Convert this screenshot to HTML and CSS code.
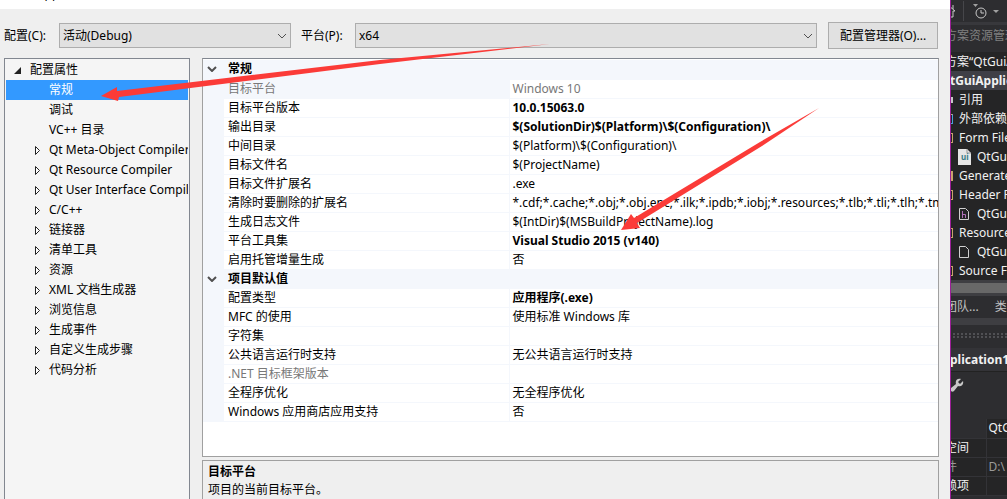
FILE: index.html
```html
<!DOCTYPE html>
<html lang="zh-CN">
<head>
<meta charset="utf-8">
<title>属性页</title>
<link rel="stylesheet" href="styles.css">
</head>
<body>
<main class="dialog">
  <header class="titlebar"><span class="title">QtGuiApp</span></header>
  <form class="config">
    <label for="cfg">配置(C):</label>
    <span class="combo combo-config">
      <select id="cfg"><option>活动(Debug)</option></select>
      <svg class="chevron" viewBox="0 0 10 6"><path d="M1 1l4 4 4-4"/></svg>
    </span>
    <label for="plat" class="label-platform">平台(P):</label>
    <span class="combo combo-platform">
      <select id="plat"><option>x64</option></select>
      <svg class="chevron" viewBox="0 0 10 6"><path d="M1 1l4 4 4-4"/></svg>
    </span>
    <button type="button" class="manager">配置管理器(O)...</button>
  </form>
  <div class="panes">
    <nav class="tree">
      <ul>
        <li class="root"><svg class="open" viewBox="0 0 7 7"><path d="M7 0v7H0z"/></svg>配置属性</li>
        <li class="selected"><i class="twist"></i>常规</li>
        <li><i class="twist"></i>调试</li>
        <li><i class="twist"></i>VC++ 目录</li>
        <li><svg class="twist" viewBox="0 0 6 9"><path d="M.5.5v8l4-4z"/></svg>Qt Meta-Object Compiler</li>
        <li><svg class="twist" viewBox="0 0 6 9"><path d="M.5.5v8l4-4z"/></svg>Qt Resource Compiler</li>
        <li><svg class="twist" viewBox="0 0 6 9"><path d="M.5.5v8l4-4z"/></svg>Qt User Interface Compiler</li>
        <li><svg class="twist" viewBox="0 0 6 9"><path d="M.5.5v8l4-4z"/></svg>C/C++</li>
        <li><svg class="twist" viewBox="0 0 6 9"><path d="M.5.5v8l4-4z"/></svg>链接器</li>
        <li><svg class="twist" viewBox="0 0 6 9"><path d="M.5.5v8l4-4z"/></svg>清单工具</li>
        <li><svg class="twist" viewBox="0 0 6 9"><path d="M.5.5v8l4-4z"/></svg>资源</li>
        <li><svg class="twist" viewBox="0 0 6 9"><path d="M.5.5v8l4-4z"/></svg>XML 文档生成器</li>
        <li><svg class="twist" viewBox="0 0 6 9"><path d="M.5.5v8l4-4z"/></svg>浏览信息</li>
        <li><svg class="twist" viewBox="0 0 6 9"><path d="M.5.5v8l4-4z"/></svg>生成事件</li>
        <li><svg class="twist" viewBox="0 0 6 9"><path d="M.5.5v8l4-4z"/></svg>自定义生成步骤</li>
        <li><svg class="twist" viewBox="0 0 6 9"><path d="M.5.5v8l4-4z"/></svg>代码分析</li>
      </ul>
    </nav>
    <section class="detail">
      <div class="sheet">
        <table class="props">
          <colgroup><col class="col-gutter"><col class="col-name"><col></colgroup>
          <tbody>
            <tr class="group"><td><svg class="fold" viewBox="0 0 10 6"><path d="M1 1l4 4 4-4"/></svg></td><th colspan="2">常规</th></tr>
            <tr class="current"><td></td><td>目标平台</td><td>Windows 10</td></tr>
            <tr><td></td><td>目标平台版本</td><td class="set">10.0.15063.0</td></tr>
            <tr><td></td><td>输出目录</td><td class="set">$(SolutionDir)$(Platform)\$(Configuration)\</td></tr>
            <tr><td></td><td>中间目录</td><td>$(Platform)\$(Configuration)\</td></tr>
            <tr><td></td><td>目标文件名</td><td>$(ProjectName)</td></tr>
            <tr><td></td><td>目标文件扩展名</td><td>.exe</td></tr>
            <tr><td></td><td>清除时要删除的扩展名</td><td>*.cdf;*.cache;*.obj;*.obj.enc;*.ilk;*.ipdb;*.iobj;*.resources;*.tlb;*.tli;*.tlh;*.tmp;</td></tr>
            <tr><td></td><td>生成日志文件</td><td>$(IntDir)$(MSBuildProjectName).log</td></tr>
            <tr><td></td><td>平台工具集</td><td class="set">Visual Studio 2015 (v140)</td></tr>
            <tr><td></td><td>启用托管增量生成</td><td>否</td></tr>
            <tr class="group"><td><svg class="fold" viewBox="0 0 10 6"><path d="M1 1l4 4 4-4"/></svg></td><th colspan="2">项目默认值</th></tr>
            <tr><td></td><td>配置类型</td><td class="set">应用程序(.exe)</td></tr>
            <tr><td></td><td>MFC 的使用</td><td>使用标准 Windows 库</td></tr>
            <tr><td></td><td>字符集</td><td></td></tr>
            <tr><td></td><td>公共语言运行时支持</td><td>无公共语言运行时支持</td></tr>
            <tr class="disabled"><td></td><td>.NET 目标框架版本</td><td></td></tr>
            <tr><td></td><td>全程序优化</td><td>无全程序优化</td></tr>
            <tr><td></td><td>Windows 应用商店应用支持</td><td>否</td></tr>
          </tbody>
        </table>
      </div>
      <div class="help">
        <strong>目标平台</strong>
        <p>项目的当前目标平台。</p>
      </div>
    </section>
  </div>
</main>
<aside class="ide">
  <div class="ide-body">
    <div class="ide-tools">
      <svg class="ico-home" viewBox="0 0 10 14"><path d="M1 1l7 6H6v6H1M6 5V1"/></svg>
      <span class="sep"></span>
      <svg class="ico-clock" viewBox="0 0 14 16"><circle cx="8" cy="10" r="5"/><path d="M8 7v3h3"/><path class="fill" d="M0 1h5L2.500 4z"/></svg>
      <svg class="ico-drop" viewBox="0 0 6 3"><path d="M0 0h6L3 3z"/></svg>
    </div>
    <div class="ide-title">方案资源管理器</div>
    <ul class="files">
      <li>方案“QtGuiApplication1”</li>
      <li class="project">tGuiApplication1</li>
      <li class="folder"><i class="mark ref"></i>引用</li>
      <li class="folder"><i class="mark dep"></i>外部依赖项</li>
      <li class="folder"><i class="mark"></i>Form Files</li>
      <li class="file"><svg class="page" viewBox="0 0 14 16"><path class="paper" d="M1 0h9l4 4v12H1z"/><path class="crease" d="M10 0v4h4"/></svg><span>QtGuiApplication1.ui</span><b class="ui">ui</b></li>
      <li class="folder"><i class="mark full"></i>Generated Files</li>
      <li class="folder"><i class="mark"></i>Header Files</li>
      <li class="file"><svg class="page" viewBox="0 0 14 16"><path class="outline" d="M2.500 2.500h6l3 3v8h-9z"/><path class="header" d="M5.500 5v7M5.500 8.500h3V12"/></svg><span>QtGuiApplication1.h</span></li>
      <li class="folder"><i class="mark"></i>Resource Files</li>
      <li class="file"><svg class="page" viewBox="0 0 14 16"><path class="outline" d="M2.500 2.500h6l3 3v8h-9z"/></svg><span>QtGuiApplication1.qrc</span></li>
      <li class="folder"><i class="mark"></i>Source Files</li>
    </ul>
    <div class="hscroll"></div>
    <div class="tabs"><span>团队...</span><span>类视图</span></div>
    <div class="grip"><div class="dots"></div></div>
    <div class="object">plication1</div>
    <div class="wrench"><svg viewBox="0 0 14 14"><path d="M1 13a2 2 0 0 1 0-3l5-4C5 3 7 0 11 1L8 4l2 2 3-3c1 4-2 6-5 5l-4 5c-1 1-2 1-3 0z"/></svg></div>
    <table class="ide-props">
      <tr><td class="blank"></td><td>QtGui</td></tr>
      <tr><td>空间</td><td></td></tr>
      <tr class="dim"><td>件</td><td>D:\</td></tr>
      <tr><td>赖项</td><td></td></tr>
    </table>
  </div>
</aside>
<svg class="arrows" viewBox="0 0 1007 499">
  <path d="M101 96L117 87L117 91L380 60L550 44L380 64L119 97L118 101z"/>
  <path d="M621 230L631 214L634 218L760 142L819 108L762 146L637 223L640 228z"/>
</svg>
</body>
</html>
```
FILE: styles.css
```css
* { box-sizing: border-box; }
body {
  margin: 0;
  height: 100vh;
  display: flex;
  overflow: hidden;
  font: 12px/18px "Noto Sans", "Noto Sans CJK SC", sans-serif;
  color: #000;
  background: #efefef;
}
ul { list-style: none; margin: 0; padding: 0; }
p { margin: 0; }
table { border-collapse: collapse; border-spacing: 0; }
select, button { font: inherit; color: inherit; }

.dialog { flex: 1; min-width: 0; display: flex; flex-direction: column; }
.titlebar {
  height: 9px;
  flex: none;
  background: #fff;
  padding: 0 4px 7px;
  display: flex;
  align-items: flex-end;
  overflow: clip;
}
.title { line-height: 16px; }

.config { flex: none; display: flex; align-items: center; padding: 13px 12px 9px 4px; }
.config label { white-space: nowrap; flex: none; width: 55px; }
.config .label-platform { width: 54px; margin-left: 10px; }
.combo { position: relative; display: flex; }
.combo select {
  appearance: none;
  width: 100%;
  height: 25px;
  padding: 0 3px;
  border: 1px solid #adadad;
  border-radius: 0;
  background: #e1e1e1;
}
.combo-config { width: 232px; }
.combo-platform { flex: 1; }
.chevron { position: absolute; right: 4px; top: 10px; width: 10px; height: 6px; pointer-events: none; }
.chevron path, .fold path { fill: none; stroke: #505050; }
.manager {
  width: 110px;
  height: 27px;
  margin-left: 11px;
  padding: 0;
  border: 1px solid #adadad;
  background: #e1e1e1;
  white-space: nowrap;
}

.panes { flex: 1; min-height: 0; display: flex; gap: 12px; padding: 0 11px 0 4px; }
.tree {
  flex: none;
  width: 186px;
  padding: 1px;
  border: 1px solid #828790;
  border-bottom: 0;
  background: #f5f5f5;
  overflow: hidden;
}
.tree li {
  height: 20px;
  padding-left: 29px;
  display: flex;
  align-items: center;
  gap: 8px;
  white-space: nowrap;
  overflow: hidden;
}
.tree .root { padding-left: 8px; gap: 9px; }
.tree .selected { background: #3399ff; color: #fff; }
.open { width: 7px; height: 7px; flex: none; fill: #222; }
.twist { width: 6px; height: 9px; flex: none; fill: #fff; stroke: #222; }

.detail { flex: 1; min-width: 0; display: flex; flex-direction: column; gap: 3px; }
.sheet {
  flex: 1;
  border: 1px solid #a0a0a0;
  border-top-color: #828790;
  padding-top: 1px;
  background: #fff;
  overflow: hidden;
}
.props { width: 100%; table-layout: fixed; }
.col-gutter { width: 21px; }
.col-name { width: 285px; }
.props tr { height: 19px; }
.props td, .props th {
  padding: 0 4px;
  text-align: left;
  line-height: 18px;
  white-space: nowrap;
  overflow: hidden;
  border-bottom: 1px solid #f4f7fc;
}
.props td + td { border-right: 1px solid #f4f7fc; }
.props td:last-child { border-right: 0; padding: 0 0 0 3px; }
.props td:first-child, .group th, .current td:nth-child(2) { background: #f4f7fc; }
.props .set { font-weight: bold; }
.current, .disabled { color: #787878; }
.fold { display: block; width: 10px; height: 6px; }
.fold path { stroke-width: 2; }
.help { flex: none; height: 39px; border: 1px solid #a0a0a0; border-bottom: 0; padding: 2px 5px; }
.help strong { display: block; }

.ide {
  flex: none;
  width: 57px;
  border-left: 1px solid #9b1f96;
  background: #2d2d30;
  color: #f1f1f1;
  overflow: hidden;
}
.ide-body { margin-left: -6px; white-space: nowrap; }
.ide-tools { height: 22px; padding-left: 2px; display: flex; align-items: center; }
.ide-tools svg { flex: none; fill: none; stroke: #c8c8c8; }
.ico-home { width: 10px; height: 14px; }
.sep { width: 1px; height: 20px; margin: 0 9px 0 6px; background: #46464a; }
.ico-clock { width: 14px; height: 16px; }
.ide-tools .fill, .ide-tools .ico-drop { fill: #a0a0a0; stroke: none; }
.ico-drop { width: 6px; height: 3px; margin-left: 6px; }
.ide-title { height: 30px; line-height: 22px; color: #808080; border-top: 3px solid #38383c; border-bottom: 5px solid #2d2d30; }
.files { background: #252526; }
.files li { height: 19px; display: flex; align-items: center; position: relative; }
.files .project { background: #3f3f46; font-weight: bold; padding-left: 5px; }
.folder { gap: 6px; }
.mark { flex: none; width: 8px; height: 10px; border: 1px solid #c9a26d; }
.mark.ref { height: 6px; background: #c8c8c8; border-color: #c8c8c8; }
.mark.dep { border-color: #4a9fdc; border-top-color: #c9a26d; }
.mark.full { background: #c9a26d; }
.files .file { padding-left: 12px; gap: 6px; }
.page { width: 14px; height: 16px; flex: none; fill: none; }
.page .paper { fill: #e6e6e6; }
.page .crease { stroke: #999; }
.page .outline { stroke: #d0d0d0; }
.page .header { stroke: #b070b8; }
.ui { position: absolute; left: 16px; top: 5px; font: bold 8px/10px "Noto Sans", sans-serif; color: #397b87; }
.hscroll { height: 16px; border: solid #3e3e42; border-width: 3px 0; background: #686868; }
.tabs { height: 22px; display: flex; gap: 16px; align-items: center; color: #c0c0c0; }
.grip { height: 30px; border-top: 7px solid #3e3e42; padding-top: 8px; }
.dots { height: 6px; background: radial-gradient(circle at 1px 1px, #505054 1px, transparent 1px) 0 0 / 4px 3px; }
.object { height: 24px; line-height: 23px; padding-left: 5px; font-weight: bold; background: #333337; border-bottom: 1px solid #222; }
.wrench { height: 47px; padding: 6px 0 0 5px; }
.wrench svg { width: 14px; height: 14px; fill: #c8c8c8; }
.ide-props { background: #252526; }
.ide-props tr { height: 19px; }
.ide-props td { padding: 0; line-height: 18px; border-bottom: 1px solid #333337; min-width: 41px; }
.ide-props td + td { border-left: 1px solid #333337; padding-left: 2px; }
.ide-props .blank { background: #2d2d30; }
.dim { color: #999; }

.arrows { position: absolute; left: 0; top: 0; width: 1007px; height: 499px; pointer-events: none; fill: #fb3b38; }
```
